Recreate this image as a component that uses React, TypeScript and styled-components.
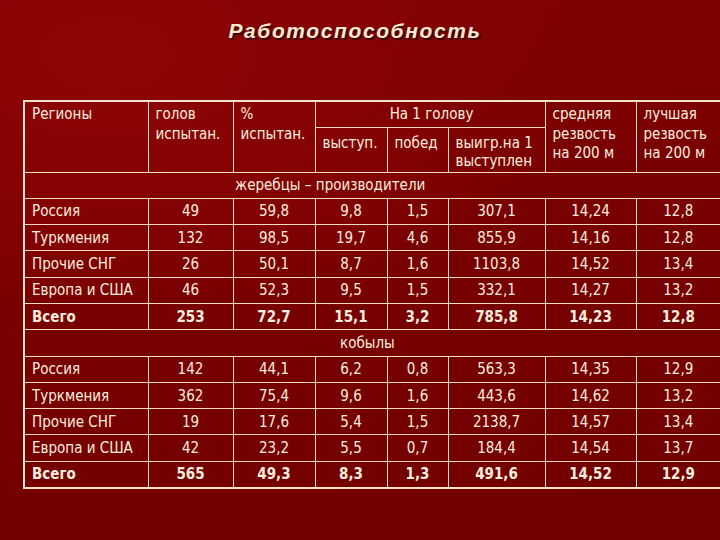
import styled, { createGlobalStyle } from "styled-components";

const GlobalStyle = createGlobalStyle`
  html, body {
    margin: 0;
    padding: 0;
  }
  body {
    width: 720px;
    height: 540px;
    overflow: hidden;
    background: #740000;
  }
`;

const Slide = styled.div`
  width: 720px;
  height: 540px;
  box-sizing: border-box;
  padding-top: 14px;
  background:
    radial-gradient(ellipse 65% 50% at 15% 10%, #8f0606 0%, #860303 45%, rgba(116, 0, 0, 0) 100%),
    linear-gradient(170deg, #820202 0%, #770000 55%, #720000 100%);
  font-family: "DejaVu Sans Condensed", "DejaVu Sans", sans-serif;
  color: #fbeedf;
`;

const Title = styled.h1`
  margin: 0;
  padding-right: 10px;
  text-align: center;
  font-family: "Liberation Sans", Arial, sans-serif;
  font-style: italic;
  font-weight: bold;
  font-size: 21px;
  letter-spacing: 1.6px;
  line-height: 34px;
  color: #f7ead0;
  text-shadow: 2px 2px 1px #3c0000;
`;

const Table = styled.table`
  margin: 52px 0 0 23px;
  width: 697px;
  table-layout: fixed;
  border-collapse: collapse;
  border: 2px solid #f6e2cf;
  font-size: 15px;
`;

const HeadCell = styled.td<{ $center?: boolean }>`
  border: 1px solid #f1dac6;
  padding: 3px 4px 2px 7px;
  vertical-align: top;
  text-align: ${(p) => (p.$center ? "center" : "left")};
  line-height: 19.5px;
  font-weight: normal;
`;

const GroupCell = styled.td<{ $indent: number }>`
  border: 1px solid #f1dac6;
  height: 25.3px;
  padding: 0 0 0 ${(p) => p.$indent}px;
  text-align: left;
  vertical-align: middle;
`;

const NameCell = styled.td<{ $total?: boolean }>`
  border: 1px solid #f1dac6;
  height: 25.3px;
  padding: 0 4px 0 7px;
  vertical-align: middle;
  white-space: nowrap;
  font-weight: ${(p) => (p.$total ? "bold" : "normal")};
`;

const NumCell = styled.td<{ $total?: boolean }>`
  border: 1px solid #f1dac6;
  height: 25.3px;
  padding: 0;
  text-align: center;
  vertical-align: middle;
  font-weight: ${(p) => (p.$total ? "bold" : "normal")};
`;

type Row = { name: string; values: string[]; total?: boolean };

const stallions: Row[] = [
  { name: "Россия", values: ["49", "59,8", "9,8", "1,5", "307,1", "14,24", "12,8"] },
  { name: "Туркмения", values: ["132", "98,5", "19,7", "4,6", "855,9", "14,16", "12,8"] },
  { name: "Прочие СНГ", values: ["26", "50,1", "8,7", "1,6", "1103,8", "14,52", "13,4"] },
  { name: "Европа и США", values: ["46", "52,3", "9,5", "1,5", "332,1", "14,27", "13,2"] },
  { name: "Всего", values: ["253", "72,7", "15,1", "3,2", "785,8", "14,23", "12,8"], total: true },
];

const mares: Row[] = [
  { name: "Россия", values: ["142", "44,1", "6,2", "0,8", "563,3", "14,35", "12,9"] },
  { name: "Туркмения", values: ["362", "75,4", "9,6", "1,6", "443,6", "14,62", "13,2"] },
  { name: "Прочие СНГ", values: ["19", "17,6", "5,4", "1,5", "2138,7", "14,57", "13,4"] },
  { name: "Европа и США", values: ["42", "23,2", "5,5", "0,7", "184,4", "14,54", "13,7"] },
  { name: "Всего", values: ["565", "49,3", "8,3", "1,3", "491,6", "14,52", "12,9"], total: true },
];

const widths = [124, 85, 82, 72, 61, 97, 91, 85];

function DataRows({ rows }: { rows: Row[] }) {
  return (
    <>
      {rows.map((r) => (
        <tr key={r.name}>
          <NameCell $total={r.total}>{r.name}</NameCell>
          {r.values.map((v, i) => (
            <NumCell key={i} $total={r.total}>
              {v}
            </NumCell>
          ))}
        </tr>
      ))}
    </>
  );
}

export default function App() {
  return (
    <Slide>
      <GlobalStyle />
      <Title>Работоспособность</Title>
      <Table>
        <colgroup>
          {widths.map((w, i) => (
            <col key={i} style={{ width: w }} />
          ))}
        </colgroup>
        <tbody>
          <tr style={{ height: 26 }}>
            <HeadCell rowSpan={2}>Регионы</HeadCell>
            <HeadCell rowSpan={2}>
              голов
              <br />
              испытан.
            </HeadCell>
            <HeadCell rowSpan={2}>
              %
              <br />
              испытан.
            </HeadCell>
            <HeadCell colSpan={3} $center>
              На 1 голову
            </HeadCell>
            <HeadCell rowSpan={2}>средняя резвость на 200 м</HeadCell>
            <HeadCell rowSpan={2}>лучшая резвость на 200 м</HeadCell>
          </tr>
          <tr style={{ height: 45 }}>
            <HeadCell style={{ paddingTop: 6 }}>выступ.</HeadCell>
            <HeadCell style={{ paddingTop: 6 }}>побед</HeadCell>
            <HeadCell style={{ paddingTop: 6, lineHeight: "18px" }}>
              выигр.на 1 выступлен
            </HeadCell>
          </tr>
          <tr>
            <GroupCell colSpan={8} $indent={210}>
              жеребцы – производители
            </GroupCell>
          </tr>
          <DataRows rows={stallions} />
          <tr>
            <GroupCell colSpan={8} $indent={315}>
              кобылы
            </GroupCell>
          </tr>
          <DataRows rows={mares} />
        </tbody>
      </Table>
    </Slide>
  );
}
